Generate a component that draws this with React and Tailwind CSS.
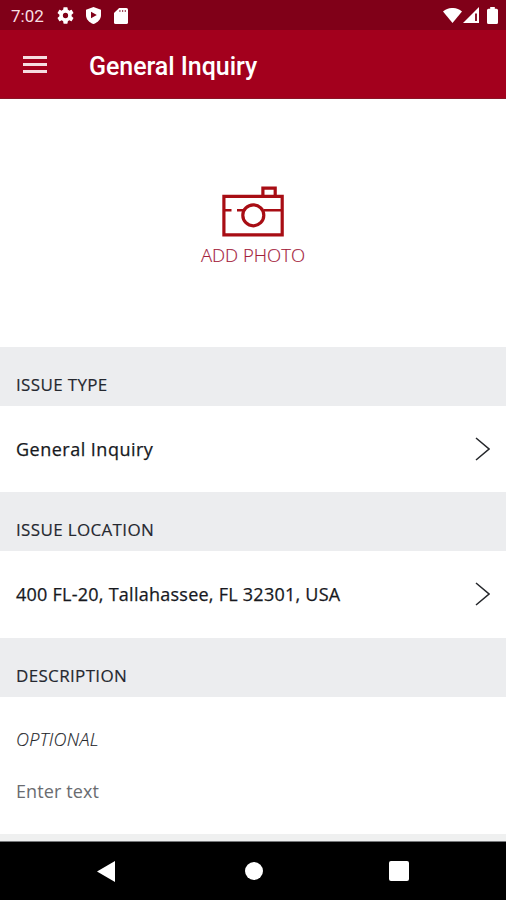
import React, { useState } from 'react';

const StatusBar = () => (
    <div className="flex h-[30px] items-center justify-between bg-[#800018] pl-[11px] pr-[8px] text-white">
        <div className="flex items-center">
            <span className="w-[46px] pt-px font-['Roboto',sans-serif] text-[17px] leading-[30px] text-[#f7dfe3]">7:02</span>
            <svg className="mt-px h-[17px] w-[17px]" viewBox="2 2 20 20" fill="currentColor">
                <path d="M19.14 12.94c.04-.3.06-.61.06-.94 0-.32-.02-.64-.07-.94l2.03-1.58a.49.49 0 0 0 .12-.61l-1.92-3.32a.488.488 0 0 0-.59-.22l-2.39.96c-.5-.38-1.03-.7-1.62-.94l-.36-2.54a.484.484 0 0 0-.48-.41h-3.84c-.24 0-.43.17-.47.41l-.36 2.54c-.59.24-1.13.57-1.62.94l-2.39-.96c-.22-.08-.47 0-.59.22L2.74 8.87c-.12.21-.08.47.12.61l2.03 1.58c-.05.3-.09.63-.09.94s.02.64.07.94l-2.03 1.58a.49.49 0 0 0-.12.61l1.92 3.32c.12.22.37.29.59.22l2.39-.96c.5.38 1.03.7 1.62.94l.36 2.54c.05.24.24.41.48.41h3.84c.24 0 .44-.17.47-.41l.36-2.54c.59-.24 1.13-.56 1.62-.94l2.39.96c.22.08.47 0 .59-.22l1.92-3.32a.49.49 0 0 0-.12-.61l-2.01-1.58zM12 15.1a3.1 3.1 0 1 1 0-6.2 3.1 3.1 0 0 1 0 6.2z" />
            </svg>
            <svg className="ml-[12px] mt-px h-[17px] w-[15px]" viewBox="0 0 15 17" fill="currentColor">
                <path fillRule="evenodd" d="M7.5 0 15 2.8v5.4c0 4-3.2 7.3-7.5 8.8C3.2 15.5 0 12.2 0 8.2V2.8zM5 4.8v6.4l5.8-3.2z" />
            </svg>
            <svg className="ml-[13px] mt-px h-[16px] w-[14px]" viewBox="0 0 13 16" preserveAspectRatio="none">
                <path d="M4.8 0H11.5Q13 0 13 1.5V14.5Q13 16 11.5 16H1.5Q0 16 0 14.5V5z" fill="currentColor" />
                <path d="M5.5 2v2M8 2v2M10.5 2v2" stroke="#a04a5c" strokeWidth="1.1" />
            </svg>
        </div>
        <div className="flex items-center">
            <svg className="h-[15px] w-[19px]" viewBox="0 0 19 15" fill="currentColor">
                <path d="M0 3.5C5.5-1.2 13.5-1.2 19 3.5L9.5 15z" />
            </svg>
            <svg className="ml-px h-[16px] w-[16px]" viewBox="0 0 16 16">
                <path d="M16 0V16H0z" fill="currentColor" />
                <path d="M13 6.5V14" stroke="#800018" strokeWidth="1.8" />
            </svg>
            <svg className="ml-[8px] h-[17px] w-[11px]" viewBox="0 0 11 17" fill="currentColor">
                <path d="M3.2 0h4.6v1.7H9.5Q11 1.7 11 3.2V15.5Q11 17 9.5 17H1.5Q0 17 0 15.5V3.2Q0 1.7 1.5 1.7H3.2z" />
            </svg>
        </div>
    </div>
);

const CameraIcon = () => (
    <svg className="h-[51px] w-[62px]" viewBox="0 0 62 51" fill="none" stroke="#a80d14" strokeWidth="3.2">
        <path d="M1.9 10.4H60.2V48.900H1.9z" />
        <path d="M40.9 10V2.1H53.2V10" />
        <circle cx="31.3" cy="29.3" r="10.5" />
        <path d="M2 24.3H9.5M15 24.3H21M42 24.3H60" strokeWidth="2.6" />
    </svg>
);

const SectionHeader = ({ title }) => (
    <div className="flex h-[59px] shrink-0 items-end bg-[#ecedef] px-4 pb-[10px]">
        <h2 className="text-[17px] leading-[22px] tracking-[0.34px] text-[#25282f] [-webkit-text-stroke:0.15px_#25282f]">{title}</h2>
    </div>
);

const SelectRow = ({ value, className }) => (
    <button className="flex h-[86.4px] w-full shrink-0 items-center justify-between bg-white pb-[0.8px] pl-4 pr-[16px] text-left">
        <span className={`text-[18px] leading-[24px] text-[#17191e] [-webkit-text-stroke:0.25px_#17191e] ${className}`}>{value}</span>
        <svg className="h-[24px] w-[15px]" viewBox="0 0 15 24" fill="none" stroke="#25272b" strokeWidth="1.5">
            <path d="M1 1 14 12 1 23" />
        </svg>
    </button>
);

const NavigationBar = () => (
    <div className="flex h-[58px] shrink-0 items-center bg-black text-white">
        <svg className="ml-[97px] h-[21px] w-[18px]" viewBox="0 0 18 21" fill="currentColor">
            <path d="M18 0V21L0 10.5z" />
        </svg>
        <div className="ml-[130px] h-[18px] w-[18px] rounded-full bg-white" />
        <div className="ml-[126px] h-[20px] w-[20px] rounded-[2px] bg-white" />
    </div>
);

const App = () => {
    const [description, setDescription] = useState('');

    return (
        <div className="flex h-[900px] w-[506px] flex-col overflow-hidden bg-white font-['Open_Sans',sans-serif]">
            <StatusBar />

            {/* App bar */}
            <header className="flex h-[69px] shrink-0 items-center border-b border-[#8b1426] bg-[#a3001d] pl-[23px] text-white">
                <button aria-label="Menu" className="flex w-[24px] flex-col gap-[4px]">
                    <span className="h-[3px] w-full bg-[#f6dce0]" />
                    <span className="h-[3px] w-full bg-[#f6dce0]" />
                    <span className="h-[3px] w-full bg-[#f6dce0]" />
                </button>
                <h1 className="ml-[42px] pt-[5px] font-['Roboto',sans-serif] text-[25px] font-medium tracking-[-0.05px]">General Inquiry</h1>
            </header>

            {/* Photo picker */}
            <button className="flex h-[248px] shrink-0 flex-col items-center pt-[87px] text-[#a3203a]">
                <CameraIcon />
                <span className="mt-[6px] text-[18.5px] font-light leading-[24px] [-webkit-text-stroke:0.15px_#a3203a]">ADD PHOTO</span>
            </button>

            <SectionHeader title="ISSUE TYPE" />
            <SelectRow value="General Inquiry" className="tracking-[0.49px]" />
            <SectionHeader title="ISSUE LOCATION" />
            <SelectRow value="400 FL-20, Tallahassee, FL 32301, USA" className="tracking-[0.25px]" />
            <SectionHeader title="DESCRIPTION" />

            {/* Description */}
            <div className="flex flex-1 flex-col px-4 pt-[30px]">
                <label htmlFor="description" className="text-[18px] font-light italic leading-[24px] tracking-[0.3px] text-[#25272b] [-webkit-text-stroke:0.15px_#25272b]">OPTIONAL</label>
                <input
                    id="description"
                    value={description}
                    onChange={(e) => setDescription(e.target.value)}
                    placeholder="Enter text"
                    className="mt-[28px] h-[26px] text-[18px] tracking-[0.1px] text-[#3b3d42] outline-none placeholder:text-[#6a6c70]"
                />
            </div>

            <div className="h-[8px] shrink-0 border-b border-[#77797b] bg-[#eff0f0]" />
            <NavigationBar />
        </div>
    );
};

export default App;
